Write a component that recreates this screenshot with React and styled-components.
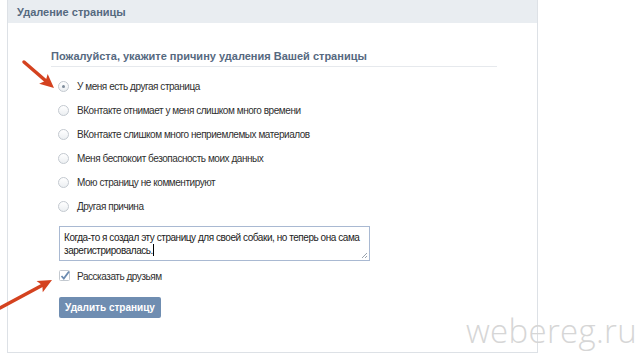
import React from "react";
import styled, {createGlobalStyle} from "styled-components";

const GlobalStyle = createGlobalStyle`
    html, body {
        margin: 0;
        padding: 0;
        background: #ffffff;
    }
    body {
        width: 640px;
        height: 354px;
        overflow: hidden;
        font-family: "Liberation Sans", Arial, sans-serif;
    }
`;

const Page = styled.div`
    position: relative;
    width: 640px;
    height: 354px;
    padding-left: 7px;
    box-sizing: border-box;
`;

const Panel = styled.div`
    width: 531px;
    height: 353px;
    box-sizing: border-box;
    border: 1px solid #dde1e6;
    border-top: none;
    background: #fff;
`;

const Header = styled.div`
    height: 23px;
    background: #e9edf1;
    display: flex;
    align-items: center;
    padding-left: 9px;
    font-size: 11px;
    font-weight: bold;
    color: #55697f;
`;

const Content = styled.div`
    padding: 27px 0 0 43px;
`;

const Question = styled.div`
    width: 446px;
    font-size: 11px;
    font-weight: bold;
    color: #56697f;
    padding-bottom: 4px;
    border-bottom: 1px solid #e6e9ed;
`;

const Options = styled.div`
    display: flex;
    flex-direction: column;
    gap: 10px;
    padding: 12px 0 0 7px;
`;

const Option = styled.label`
    display: flex;
    align-items: center;
    gap: 8px;
    height: 14px;
    font-size: 10px;
    letter-spacing: -0.45px;
    color: #2f2f2f;
`;

const Radio = styled.span`
    position: relative;
    width: 11px;
    height: 11px;
    border-radius: 50%;
    border: 1px solid #c3c9d0;
    background: linear-gradient(#ffffff, #eceff2);
    box-sizing: border-box;
    flex: none;

    &::after {
        content: "";
        display: ${props => props.checked ? "block" : "none"};
        position: absolute;
        left: 3px;
        top: 3px;
        width: 3px;
        height: 3px;
        border-radius: 50%;
        background: #7f8c9b;
    }
`;

const TextArea = styled.div`
    position: relative;
    margin: 13px 0 0 8px;
    width: 311px;
    height: 35px;
    box-sizing: border-box;
    border: 1px solid #a9b9d2;
    padding: 4px 4px;
    font-size: 10px;
    letter-spacing: -0.45px;
    line-height: 13px;
    color: #222;
`;

const Caret = styled.span`
    display: inline-block;
    width: 1px;
    height: 12px;
    background: #000;
    vertical-align: -2px;
`;

const Grip = styled.svg`
    position: absolute;
    right: 1px;
    bottom: 1px;
`;

const CheckRow = styled(Option)`
    margin: 8px 0 0 8px;
    gap: 6px;
`;

const Check = styled.svg`
    flex: none;
`;

const Button = styled.div`
    margin: 14px 0 0 8px;
    width: 102px;
    height: 21px;
    background: #6f8db1;
    border-radius: 2px;
    display: flex;
    align-items: center;
    justify-content: center;
    font-size: 10px;
    font-weight: bold;
    color: #fff;
`;

const Overlay = styled.svg`
    position: absolute;
    left: 0;
    top: 0;
    pointer-events: none;
`;

const Watermark = styled.div`
    position: absolute;
    right: 3px;
    bottom: 1px;
    font-family: "Open Sans", "DejaVu Sans", sans-serif;
    font-weight: 300;
    font-size: 33px;
    color: #d6d6d6;
    letter-spacing: 0.3px;
`;

const reasons = [
    "У меня есть другая страница",
    "ВКонтакте отнимает у меня слишком много времени",
    "ВКонтакте слишком много неприемлемых материалов",
    "Меня беспокоит безопасность моих данных",
    "Мою страницу не комментируют",
    "Другая причина",
];

// red pointer arrow from tail (x1,y1) to tip (x2,y2)
const RedArrow = ({x1, y1, x2, y2}) => {
    const a = Math.atan2(y2 - y1, x2 - x1);
    const len = 14, w = 6.5;
    const bx = x2 - len * Math.cos(a), by = y2 - len * Math.sin(a);
    const nx = -Math.sin(a) * w, ny = Math.cos(a) * w;
    const mx = x2 - (len - 3) * Math.cos(a), my = y2 - (len - 3) * Math.sin(a);
    return (
        <g>
            <path d={`M${x1} ${y1} L${mx} ${my}`} stroke="#d4421f" strokeWidth="3.5" strokeLinecap="round"/>
            <path d={`M${x2} ${y2} L${bx + nx} ${by + ny} L${mx} ${my} L${bx - nx} ${by - ny} Z`} fill="#d4421f"/>
        </g>
    );
};

export default function App() {
    return (
        <Page>
            <GlobalStyle/>
            <Panel>
                <Header>Удаление страницы</Header>
                <Content>
                    <Question>Пожалуйста, укажите причину удаления Вашей страницы</Question>
                    <Options>
                        {reasons.map((r, i) => (
                            <Option key={r}>
                                <Radio checked={i === 0}/>
                                {r}
                            </Option>
                        ))}
                    </Options>
                    <TextArea>
                        Когда-то я создал эту страницу для своей собаки, но теперь она сама зарегистрировалась.<Caret/>
                        <Grip width="7" height="7" viewBox="0 0 7 7">
                            <path d="M6 1 L1 6 M6 4 L4 6" stroke="#9aa3ad" strokeWidth="1"/>
                        </Grip>
                    </TextArea>
                    <CheckRow>
                        <Check width="12" height="12" viewBox="0 0 12 12">
                            <rect x="0.5" y="0.5" width="10" height="10" rx="1" fill="#fff" stroke="#c3c9d0"/>
                            <path d="M2.5 6 L4.8 8.5 L10 1.5" fill="none" stroke="#6b8bb0" strokeWidth="1.8"/>
                        </Check>
                        Рассказать друзьям
                    </CheckRow>
                    <Button>Удалить страницу</Button>
                </Content>
            </Panel>
            <Overlay width="640" height="354">
                <RedArrow x1={24} y1={62} x2={54} y2={88}/>
                <RedArrow x1={0} y1={308} x2={52} y2={280}/>
            </Overlay>
            <Watermark>webereg.ru</Watermark>
        </Page>
    );
}
